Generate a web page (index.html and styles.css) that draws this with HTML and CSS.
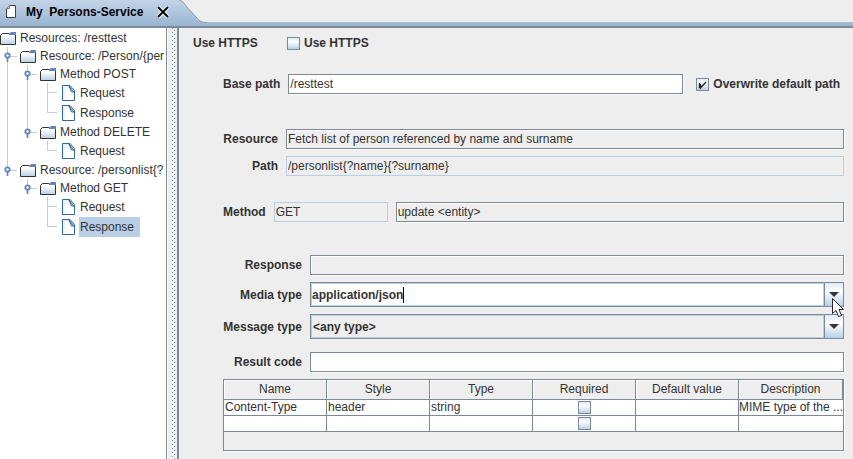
FILE: index.html
```html
<!DOCTYPE html>
<html lang="en">
<head>
<meta charset="utf-8">
<title>My Persons-Service</title>
<link rel="stylesheet" href="styles.css">
</head>
<body>
<svg class="defs" aria-hidden="true">
  <defs>
    <linearGradient id="fold" x1="0" y1="0" x2="0" y2="1"><stop offset="0.2" stop-color="#fff"/><stop offset="1" stop-color="#b8cfe5"/></linearGradient>
    <symbol id="folder" viewBox="0 0 16 14">
      <path d="M.5 13.500V4.500L2.500 2.500H9L10 3.500H15.500V13.500Z" fill="url(#fold)" stroke="#333"/>
      <path d="M9 4V3L11 1H16V4Z" fill="#6382bf"/>
    </symbol>
    <symbol id="leaf" viewBox="0 0 13 16">
      <path d="M.5.5H8L12.500 5.500V15.500H.5Z" fill="#fff" stroke="#31659c"/>
      <path d="M2 14V2H7" fill="none" stroke="#dce8f4"/>
      <path d="M7 1L12 7H9.500Z" fill="#c4d8ec" stroke="#31659c"/>
    </symbol>
    <symbol id="handle" viewBox="0 0 7 10">
      <path d="M3 5H4V10H3Z" fill="#6382bf" stroke="#6382bf" stroke-width=".6"/>
      <circle cx="3.500" cy="3.500" r="2.200" fill="#fff" stroke="#6382bf" stroke-width="1.800"/>
    </symbol>
  </defs>
</svg>

<header class="tabs">
  <div class="tab">
    <svg class="tab-icon" width="10" height="13" viewBox="0 0 10 13"><path d="M3.500.5H9.500V12.500H.5V3.500Z" fill="#fff" stroke="#444"/><path d="M.5 3.500H3.500V.5" fill="#ddd" stroke="#777"/></svg>
    <span class="tab-title">My  Persons-Service</span>
    <button class="close" type="button" aria-label="Close"><svg width="14" height="14" viewBox="0 0 14 14"><path d="M2 2L12 12M12 2L2 12" stroke="#e6eef6" stroke-width="4"/><path d="M2 2L12 12M12 2L2 12" stroke="#000" stroke-width="1.800"/></svg></button>
  </div>
  <svg class="curve" width="28" height="23" viewBox="0 0 28 23"><path d="M0 0C4 1 5 3 7 6L17 17C21 21 22 22.500 28 22.500V0Z" fill="#eee"/><path d="M0 0C4 1 5 3 7 6L17 17C21 21 22 22.500 28 22.500" fill="none" stroke="#999"/></svg>
  <div class="rest"></div>
</header>

<div class="split">
  <nav class="tree">
    <ul class="root">
      <li>
        <div class="node"><svg class="folder"><use href="#folder"/></svg><span>Resources: /resttest</span></div>
        <ul>
          <li>
            <div class="node"><svg class="handle"><use href="#handle"/></svg><svg class="folder"><use href="#folder"/></svg><span>Resource: /Person/{per</span></div>
            <ul>
              <li>
                <div class="node"><svg class="handle"><use href="#handle"/></svg><svg class="folder"><use href="#folder"/></svg><span>Method POST</span></div>
                <ul>
                  <li class="leaf"><div class="node"><svg class="page"><use href="#leaf"/></svg><span>Request</span></div></li>
                  <li class="leaf"><div class="node"><svg class="page"><use href="#leaf"/></svg><span>Response</span></div></li>
                </ul>
              </li>
              <li>
                <div class="node"><svg class="handle"><use href="#handle"/></svg><svg class="folder"><use href="#folder"/></svg><span>Method DELETE</span></div>
                <ul>
                  <li class="leaf"><div class="node"><svg class="page"><use href="#leaf"/></svg><span>Request</span></div></li>
                </ul>
              </li>
            </ul>
          </li>
          <li>
            <div class="node"><svg class="handle"><use href="#handle"/></svg><svg class="folder"><use href="#folder"/></svg><span>Resource: /personlist{?</span></div>
            <ul>
              <li>
                <div class="node"><svg class="handle"><use href="#handle"/></svg><svg class="folder"><use href="#folder"/></svg><span>Method GET</span></div>
                <ul>
                  <li class="leaf"><div class="node"><svg class="page"><use href="#leaf"/></svg><span>Request</span></div></li>
                  <li class="leaf"><div class="node"><svg class="page"><use href="#leaf"/></svg><span class="selected">Response</span></div></li>
                </ul>
              </li>
            </ul>
          </li>
        </ul>
      </li>
    </ul>
  </nav>
  <div class="divider"><div class="bumps"></div></div>

  <main class="form">
    <div class="row https">
      <span class="https-title">Use HTTPS</span>
      <label class="check"><input type="checkbox">Use HTTPS</label>
    </div>

    <div class="body">
      <div class="row base">
        <label for="base">Base path</label>
        <input class="field" id="base" type="text" value="/resttest">
        <label class="check"><input type="checkbox" checked>Overwrite default path</label>
      </div>

      <div class="group resource">
        <label for="resource">Resource</label>
        <input class="field plain" id="resource" type="text" value="Fetch list of person referenced by name and surname">
        <label for="path">Path</label>
        <input class="field locked" id="path" type="text" value="/personlist{?name}{?surname}" readonly>
      </div>

      <div class="row method">
        <label for="method">Method</label>
        <input class="field locked verb" id="method" type="text" value="GET" readonly>
        <input class="field plain" type="text" value="update &lt;entity&gt;" aria-label="Method description">
      </div>

      <div class="group response">
        <label for="response">Response</label>
        <input class="field plain" id="response" type="text">
        <label for="media">Media type</label>
        <div class="combo editable">
          <div class="edit"><input id="media" type="text" value="application/json"></div>
          <button class="arrow" type="button" aria-label="Show media types"><svg width="10" height="5" viewBox="0 0 10 5"><path d="M0 0H10L5 5Z" fill="#333"/></svg></button>
          <svg class="pointer" width="12" height="20" viewBox="0 0 12 20"><path d="M.5.5V15.500L4 12.500L6.500 18.500L9.500 17.500L7 11.500H11.500Z" fill="#fff" stroke="#223"/></svg>
        </div>
        <label for="message">Message type</label>
        <div class="combo">
          <select id="message"><option>&lt;any type&gt;</option></select>
          <span class="arrow"><svg width="10" height="5" viewBox="0 0 10 5"><path d="M0 0H10L5 5Z" fill="#333"/></svg></span>
        </div>
      </div>

      <div class="group code">
        <label for="code">Result code</label>
        <input class="field" id="code" type="text">
      </div>

      <div class="params">
        <table>
          <thead><tr><th>Name</th><th>Style</th><th>Type</th><th>Required</th><th>Default value</th><th class="last">Description</th></tr></thead>
          <tbody>
            <tr><td>Content-Type</td><td>header</td><td>string</td><td class="mid"><input type="checkbox" aria-label="Content-Type required"></td><td></td><td class="last">MIME type of the ...</td></tr>
            <tr><td></td><td></td><td></td><td class="mid"><input type="checkbox" aria-label="Required"></td><td></td><td class="last"></td></tr>
          </tbody>
        </table>
      </div>
    </div>
  </main>
</div>
</body>
</html>
```
FILE: styles.css
```css
* { box-sizing: border-box; }
:root {
  --line: #7a8a99;
  --soft: #b8cfe5;
  --face: #eee;
}
body {
  margin: 0;
  min-height: 100vh;
  display: flex;
  flex-direction: column;
  background: var(--face);
  color: #333;
  font: 12px/16px "Liberation Sans", Arial, sans-serif;
}
input, select, button { font: inherit; color: inherit; margin: 0; }
svg { display: block; flex: none; }
.defs { position: absolute; width: 0; height: 0; }

/* Tab strip */
.tabs {
  display: flex;
  align-items: flex-start;
  height: 28px;
  border-bottom: 2px solid var(--line);
  background: linear-gradient(#c3d4e7, #98b5d1);
}
.tab { display: flex; align-items: center; height: 23px; padding-left: 6px; width: 179px; }
.tab-title { margin-left: 10px; font-weight: bold; color: #000; white-space: pre; }
.close { margin: 0 9px 0 auto; padding: 0; border: 0; background: none; }
.rest { flex: 1; height: 23px; background: var(--face); border-bottom: 1px solid #b4bcc4; }

/* Tree */
.split { flex: 1; display: flex; }
.tree {
  flex: none;
  width: 167px;
  overflow: hidden;
  padding-top: 1px;
  background: #fff;
  border-right: 1px solid var(--line);
}
.tree ul { list-style: none; margin: 0 0 0 20px; padding: 0; }
.tree .root { margin: 0; }
.tree li { position: relative; }
.tree ul ul > li::before,
.tree ul ul > li::after { content: ""; position: absolute; left: -13px; background: var(--soft); }
.tree ul ul > li::before { top: 0; bottom: 0; width: 1px; }
.tree ul ul > li:last-child::before { bottom: auto; height: 9px; }
.tree ul ul > li::after { top: 9px; width: 10px; height: 1px; }
.node { display: flex; align-items: center; position: relative; height: 18px; white-space: nowrap; }
.node span { padding: 0 1px; margin-left: 3px; line-height: 18px; }
.leaf .node { height: 20px; padding-left: 2px; }
.leaf .node span { line-height: 20px; margin-left: 4px; }
.node .selected { padding-right: 6px; background: var(--soft); }
.folder { width: 16px; height: 14px; }
.page { width: 13px; height: 16px; }
.handle { position: absolute; left: -16px; top: 5px; width: 7px; height: 10px; z-index: 1; }

.divider {
  flex: none;
  width: 12px;
  padding: 0 2px 0 4px;
  border-left: 1px solid #fff;
  border-right: 2px solid var(--line);
}
.bumps {
  height: 100%;
  background:
    linear-gradient(#7a8a99, #7a8a99) 0 0 / 1px 1px,
    #f6f9fc;
  background:
    conic-gradient(from 270deg at 1px 1px, #7a8a99 90deg, transparent 0) 0 0 / 4px 4px,
    conic-gradient(from 270deg at 1px 1px, #7a8a99 90deg, transparent 0) 2px 2px / 4px 4px,
    #f6f9fc;
}

/* Form */
.form { flex: 1; min-width: 0; padding: 6px 9px 8px 14px; }
.form label, .https-title { font-weight: bold; white-space: nowrap; }
.row { display: flex; align-items: center; }
.https-title { width: 94px; }
.https { height: 18px; }
.check { display: flex; align-items: center; gap: 4px; }
input[type="checkbox"] {
  appearance: none;
  flex: none;
  width: 13px;
  height: 13px;
  border: 1px solid var(--line);
  background: linear-gradient(#dfe9f3, #fff 35%, #b8cfe5);
}
input[type="checkbox"]:checked {
  background: url("data:image/svg+xml,%3Csvg xmlns='http://www.w3.org/2000/svg' viewBox='0 0 11 11'%3E%3Cpath d='M2.500 4V9M3.500 5V9L9 3' fill='none' stroke='%23222' stroke-width='1.400'/%3E%3C/svg%3E"),
    linear-gradient(#dfe9f3, #fff 35%, #b8cfe5);
}
.body { margin-left: 30px; }
.field {
  flex: 1;
  min-width: 0;
  width: 100%;
  height: 20px;
  padding: 0 1px;
  outline: 0;
  border: 1px solid var(--line);
  background: #fff;
  box-shadow: 1px 1px 0 #fff;
}
.field.plain { background: var(--face); box-shadow: 1px 1px 0 #fff, inset 1px 1px 0 #fff; }
.field.locked { background: var(--face); border-color: var(--soft); box-shadow: none; }
.base { margin-top: 22px; gap: 8px; }
.base .check { margin: 0 4px 0 5px; }
.group { display: grid; align-items: center; column-gap: 8px; }
.group label { text-align: right; }
.resource { margin-top: 35px; grid-template-columns: 55px 1fr; row-gap: 7px; }
.method { margin-top: 26px; gap: 8px; }
.method .verb { flex: none; width: 114px; }
.response, .code { grid-template-columns: 79px 1fr; }
.response { margin-top: 33px; row-gap: 7px; }
.code { margin-top: 13px; }

.combo { position: relative; display: flex; height: 25px; border: 1px solid var(--line); }
.edit, .combo select { flex: 1; min-width: 0; border: 1px solid var(--soft); }
.edit { display: flex; align-items: center; background: #fff; }
.edit input {
  field-sizing: content;
  height: 16px;
  padding: 0;
  border: 0;
  border-right: 1px solid #000;
  outline: 0;
  background: none;
  font-weight: bold;
}
.combo select { appearance: none; padding: 0 1px; background: var(--face); border-radius: 0; font-weight: bold; outline: 0; }
.arrow {
  display: flex;
  align-items: center;
  justify-content: center;
  width: 19px;
  padding: 0;
  border: 0;
  border-left: 1px solid var(--line);
  background: linear-gradient(#dfe9f3, #fff 35%, #b8cfe5);
}
.pointer { position: absolute; right: -1px; top: 15px; z-index: 1; }

/* Parameters table */
.params { margin-top: 7px; min-height: 72px; border: 1px solid var(--line); box-shadow: 1px 1px 0 #fff; }
table { width: 100%; table-layout: fixed; border-collapse: separate; border-spacing: 0; }
th, td {
  height: 16px;
  padding: 0 1px;
  border-right: 1px solid var(--line);
  border-bottom: 1px solid var(--line);
  line-height: 15px;
  overflow: hidden;
  white-space: nowrap;
}
th { width: 103px; height: 20px; font-weight: normal; box-shadow: inset 1px 1px 0 #fff; }
th.last { width: auto; }
td { background: #fff; }
td.last { padding: 0; border-right: 0; }
.mid { text-align: center; line-height: 0; }
.mid input { vertical-align: middle; }
```
